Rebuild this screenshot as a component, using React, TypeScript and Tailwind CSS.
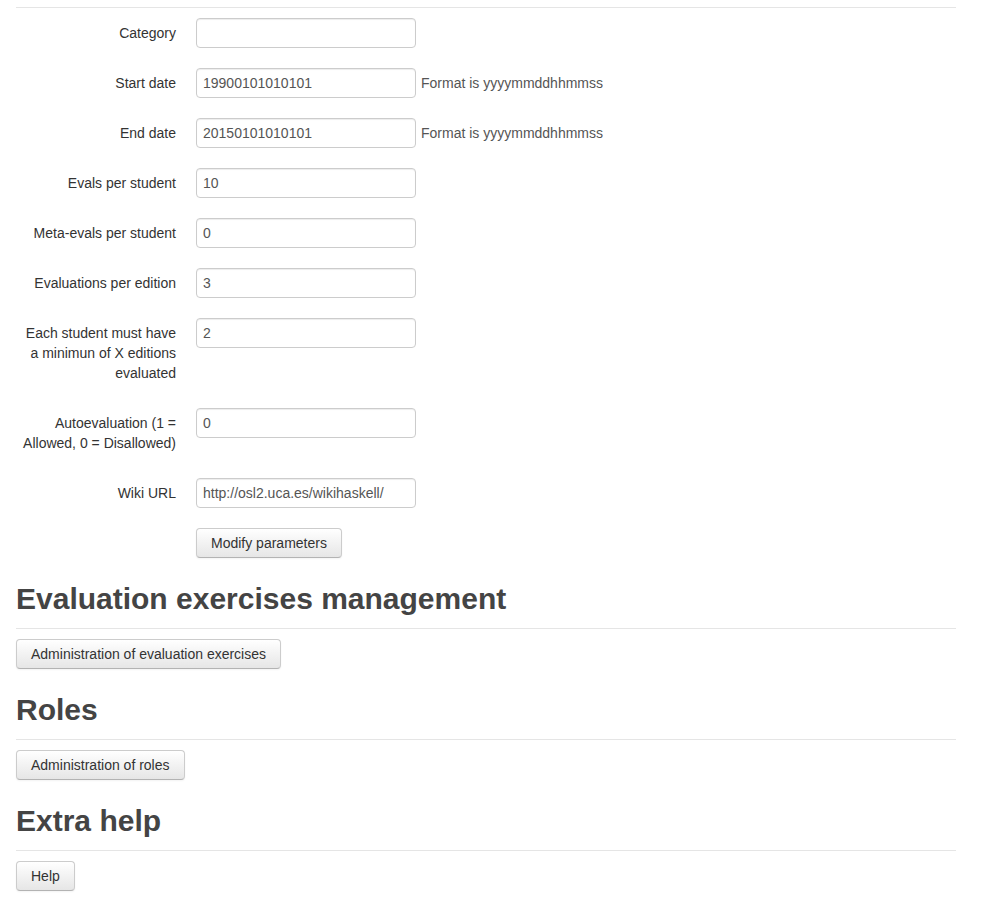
import React from "react";

interface Field {
  label: string;
  value: string;
  help?: string;
}

const fields: Field[] = [
  { label: "Category", value: "" },
  { label: "Start date", value: "19900101010101", help: "Format is yyyymmddhhmmss" },
  { label: "End date", value: "20150101010101", help: "Format is yyyymmddhhmmss" },
  { label: "Evals per student", value: "10" },
  { label: "Meta-evals per student", value: "0" },
  { label: "Evaluations per edition", value: "3" },
  { label: "Each student must have a minimun of X editions evaluated", value: "2" },
  { label: "Autoevaluation (1 = Allowed, 0 = Disallowed)", value: "0" },
  { label: "Wiki URL", value: "http://osl2.uca.es/wikihaskell/" },
];

const btn =
  "rounded-[4px] border border-[#ccc] border-b-[#b3b3b3] bg-gradient-to-b from-white to-[#e6e6e6] px-[14px] py-[4px] text-[14px] leading-5 text-[#333] shadow-[inset_0_1px_0_rgba(255,255,255,.2),0_1px_2px_rgba(0,0,0,.05)]";

function Section({ title, button }: { title: string; button: string }) {
  return (
    <div>
      <h2 className="mt-[21px] border-b border-[#e5e5e5] pb-[9px] text-[30px] font-bold leading-[40px] text-[#444]">
        {title}
      </h2>
      <div className="mt-[10px]">
        <button className={btn}>{button}</button>
      </div>
    </div>
  );
}

export default function App() {
  return (
    <div
      className="min-h-[897px] bg-white px-[16px] pt-[7px] text-[14px] text-[#333]"
      style={{ fontFamily: '"Liberation Sans", Arial, sans-serif' }}
    >
      <div className="w-[940px]">
        <form className="border-t border-[#e5e5e5] pt-[10px]" onSubmit={(e) => e.preventDefault()}>
          {fields.map((f) => (
            <div key={f.label} className="mb-[20px] flex items-start">
              <label className="w-[160px] shrink-0 py-[5px] text-right leading-5">{f.label}</label>
              <div className="ml-[20px] flex items-center">
                <input
                  readOnly
                  value={f.value}
                  className="h-[30px] w-[220px] rounded-[4px] border border-[#ccc] px-[6px] py-[4px] text-[14px] leading-5 text-[#555] shadow-[inset_0_1px_1px_rgba(0,0,0,.075)] outline-none"
                />
                {f.help && <span className="ml-[5px] text-[#555]">{f.help}</span>}
              </div>
            </div>
          ))}
          <div className="ml-[180px]">
            <button type="submit" className={btn}>
              Modify parameters
            </button>
          </div>
        </form>
        <Section title="Evaluation exercises management" button="Administration of evaluation exercises" />
        <Section title="Roles" button="Administration of roles" />
        <Section title="Extra help" button="Help" />
      </div>
    </div>
  );
}
